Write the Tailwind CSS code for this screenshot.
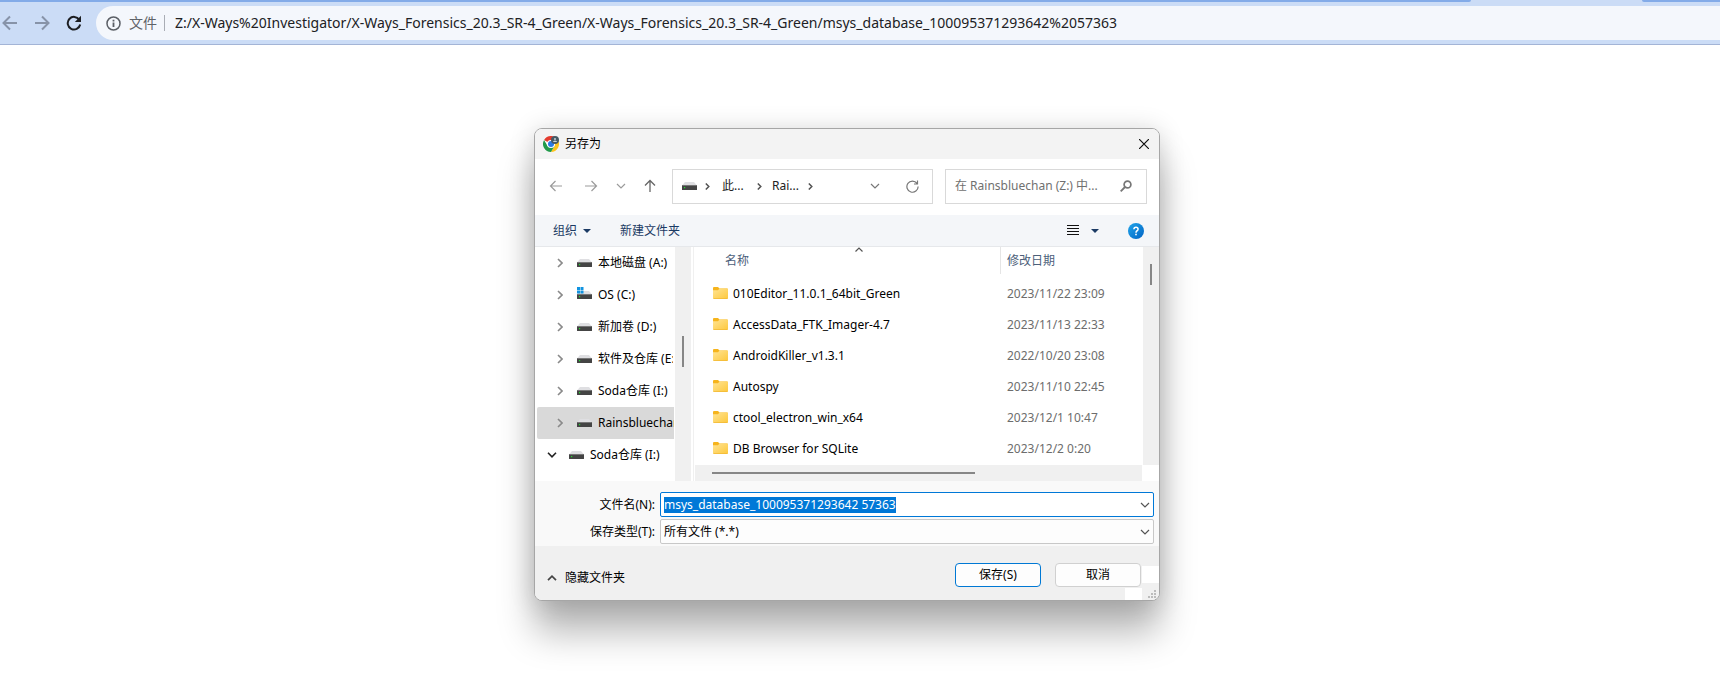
<!DOCTYPE html>
<html lang="zh-CN">
<head>
<meta charset="utf-8">
<title>另存为</title>
<script src="https://cdn.jsdelivr.net/npm/@tailwindcss/browser@4"></script>
</head>
<body class="relative min-h-screen overflow-hidden bg-white font-['Noto_Sans','Noto_Sans_CJK_SC',sans-serif] text-xs text-black">

<svg class="absolute size-0" aria-hidden="true">
  <defs>
    <linearGradient id="fold" x1="0" y1="0" x2="1" y2="1"><stop offset="0" stop-color="#ffe494"/><stop offset="1" stop-color="#fdc83c"/></linearGradient>
    <linearGradient id="help-fill" x1="0" y1="0" x2="1" y2="1"><stop offset="0" stop-color="#22a5ea"/><stop offset="1" stop-color="#0063c4"/></linearGradient>
  </defs>
  <symbol id="drive" viewBox="0 0 15 8"><path d="M3 0h9l3 3.500H0z" fill="#dfdfe2"/><rect y="3" width="15" height="5" rx=".6" fill="#444"/><path d="M.3 3.500h14.400" stroke="#777"/><rect x="2" y="5" width="1.200" height="1.200" fill="#1fe02c"/></symbol>
  <symbol id="folder" viewBox="0 0 15 12"><path d="M0 1Q0 0 1 0h4l1.500 1.500H14q1 0 1 1V6H0z" fill="#f6b41c"/><path d="M0 3.200h5L6.500 1.500H14q1 0 1 1V11q0 1-1 1H1q-1 0-1-1z" fill="url(#fold)"/><path d="M.5 11.600h14" stroke="#f0b833" stroke-width=".8"/></symbol>
  <symbol id="down" viewBox="0 0 10 6"><path d="M1 1l4 4 4-4" fill="none" stroke="currentColor" stroke-width="1.200"/></symbol>
  <symbol id="right" viewBox="0 0 6 10"><path d="M1 1l4 4-4 4" fill="none" stroke="currentColor" stroke-width="1.600"/></symbol>
  <symbol id="crumb" viewBox="0 0 5 7"><path d="M.8.5l3 3-3 3" fill="none" stroke="currentColor" stroke-width="1.500"/></symbol>
</svg>

<header class="border-b border-[#a3b4d6] bg-[#cbdcf6]">
  <div class="flex h-[2px] justify-between">
    <div class="w-[1471px] rounded-br bg-[#83abe8]"></div>
    <div class="w-[78px] rounded-bl bg-[#83abe8]"></div>
  </div>
  <div class="flex h-[42px] items-center py-1">
    <div class="flex w-24 items-center gap-4 pl-0.5">
      <button aria-label="后退" class="text-[#8793a8]"><svg class="size-4" viewBox="0 0 16 16" fill="none" stroke="currentColor" stroke-width="2"><path d="M15 8H2M8 1.500L1.500 8 8 14.500"/></svg></button>
      <button aria-label="前进" class="text-[#8793a8]"><svg class="size-4" viewBox="0 0 16 16" fill="none" stroke="currentColor" stroke-width="2"><path d="M1 8h13M8 1.500L14.500 8 8 14.500"/></svg></button>
      <button aria-label="重新加载" class="text-[#1c1e22]"><svg class="size-4" viewBox="0 0 16 16"><path d="M13.300 4.700A6.300 6.300 0 1 0 14.200 9.500" fill="none" stroke="currentColor" stroke-width="2"/><path d="M15 .8V7H8.800z" fill="currentColor"/></svg></button>
    </div>
    <div class="flex h-[34px] flex-1 items-center rounded-l-full bg-[#f4f7fc] pl-[10px] text-sm leading-5">
      <svg class="size-[15px] text-[#5b5f66]" viewBox="0 0 15 15"><circle cx="7.500" cy="7.500" r="6.500" fill="none" stroke="currentColor" stroke-width="1.500"/><path d="M6.600 6.500h1.800V11H6.600zM6.600 3.800h1.800v1.700H6.600z" fill="currentColor"/></svg>
      <span class="ml-2 text-[#5f6368]">文件</span>
      <span class="ml-[7px] h-4 w-px bg-[#a9adb5]"></span>
      <input aria-label="地址" class="ml-2.5 min-w-0 flex-1 bg-transparent text-[#202124] outline-none" value="Z:/X-Ways%20Investigator/X-Ways_Forensics_20.3_SR-4_Green/X-Ways_Forensics_20.3_SR-4_Green/msys_database_100095371293642%2057363">
    </div>
  </div>
</header>

<section role="dialog" aria-label="另存为" class="absolute left-[534px] top-[128px] w-[626px] overflow-hidden rounded-lg border border-[#a6a6a6] bg-white leading-4 shadow-[0_32px_36px_rgba(0,0,0,0.28),0_2px_26px_rgba(0,0,0,0.16)]">
  <div class="flex h-[30px] items-center bg-[#f3f3f3] pl-2 pr-[10px]">
    <svg class="size-4" viewBox="0 0 16 16"><circle cx="8" cy="8" r="8" fill="#fff"/><path d="M8 8L1.070 4A8 8 0 0 1 14.930 4H8z" fill="#e33b2e"/><path d="M8 4h6.930A8 8 0 0 1 8 16l3.460-6z" fill="#fcc31e"/><path d="M1.070 4A8 8 0 0 0 8 16l3.460-6H4.540z" fill="#229a4b"/><circle cx="8" cy="8" r="4" fill="#fff"/><circle cx="8" cy="8" r="3" fill="#2c7be5"/><circle cx="12" cy="4" r="4" fill="#465a65"/><circle cx="12" cy="3" r="1" fill="#c7d3da"/><path d="M10 6q0-1.500 2-1.500T14 6z" fill="#c7d3da"/></svg>
    <h1 class="ml-1.5">另存为</h1>
    <button aria-label="关闭" class="ml-auto"><svg class="size-[10px]" viewBox="0 0 10 10"><path d="M0 0l10 10M10 0L0 10" stroke="#111" stroke-width="1.200"/></svg></button>
  </div>

  <div class="flex h-14 items-center pb-0.5 pl-[14px] pr-3">
    <div class="flex w-[123px] items-center text-[#9b9b9b]">
      <button aria-label="后退"><svg class="size-[14px]" viewBox="0 0 14 14" fill="none" stroke="currentColor" stroke-width="1.200"><path d="M13 7H1.500M6.500 2l-5 5 5 5"/></svg></button>
      <button aria-label="前进" class="ml-[21px]"><svg class="size-[14px]" viewBox="0 0 14 14" fill="none" stroke="currentColor" stroke-width="1.200"><path d="M1 7h11.500M7.500 2l5 5-5 5"/></svg></button>
      <button aria-label="最近位置" class="ml-[18px]"><svg class="h-[6px] w-[10px]"><use href="#down"/></svg></button>
      <button aria-label="上移" class="ml-[17px] text-[#666]"><svg class="size-[14px]" viewBox="0 0 14 14" fill="none" stroke="currentColor" stroke-width="1.300"><path d="M7 13V1.500M2 6.500l5-5 5 5"/></svg></button>
    </div>
    <nav aria-label="路径" class="flex h-[35px] flex-1 items-center border border-[#d9d9d9] px-[9px] text-[#222]">
      <svg class="h-2 w-[15px]"><use href="#drive"/></svg>
      <svg class="ml-2 h-[7px] w-[5px] text-[#555]"><use href="#crumb"/></svg>
      <button class="ml-3 w-[24px] text-left whitespace-nowrap">此...</button>
      <svg class="ml-[11px] h-[7px] w-[5px] text-[#555]"><use href="#crumb"/></svg>
      <button class="ml-2.5 w-[28px] text-left whitespace-nowrap">Rai...</button>
      <svg class="ml-2 h-[7px] w-[5px] text-[#555]"><use href="#crumb"/></svg>
      <button aria-label="以前的位置" class="ml-auto text-[#777]"><svg class="h-[6px] w-[10px]"><use href="#down"/></svg></button>
      <button aria-label="刷新" class="ml-[26px] mr-1 text-[#777]"><svg class="size-[13px]" viewBox="0 0 13 13" fill="none" stroke="currentColor" stroke-width="1.200"><path d="M11 3.300A5.600 5.600 0 1 0 12.100 6.500M11.500.5v3.500H8"/></svg></button>
    </nav>
    <label class="ml-3 flex h-[35px] w-[202px] items-center border border-[#d9d9d9] pl-[9px] pr-[14px]">
      <input aria-label="搜索" class="min-w-0 flex-1 outline-none placeholder:text-[#707070]" placeholder="在 Rainsbluechan (Z:) 中...">
      <svg class="size-3 text-[#777]" viewBox="0 0 12 12" fill="none" stroke="currentColor"><circle cx="7.500" cy="4.500" r="3.400" stroke-width="1.700"/><path d="M5 7L.7 11.300" stroke-width="1.800"/></svg>
    </label>
  </div>

  <div class="flex h-8 items-center border-b border-[#e6e8eb] bg-[#f4f6f9] pl-[18px] pr-[15px] text-[#1b3a64]">
    <button class="flex items-center gap-1.5">组织<svg class="h-1 w-2" viewBox="0 0 8 4"><path d="M0 0h8L4 4z" fill="currentColor"/></svg></button>
    <button class="ml-[29px]">新建文件夹</button>
    <button aria-label="更改视图" class="ml-auto flex items-center gap-3"><svg class="h-[11px] w-3" viewBox="0 0 12 11"><path d="M0 .5h12M0 3.500h12M0 6.500h12M0 9.500h12" stroke="#111"/></svg><svg class="h-1 w-2" viewBox="0 0 8 4"><path d="M0 0h8L4 4z" fill="currentColor"/></svg></button>
    <button aria-label="帮助" class="ml-[29px]"><svg class="size-4" viewBox="0 0 16 16"><circle cx="8" cy="8" r="8" fill="url(#help-fill)"/><path d="M5.900 6.200Q6 4.200 8 4.200t2.100 1.900Q10.100 7.200 8.800 8 8 8.500 8 9.700" fill="none" stroke="#fff" stroke-width="1.500"/><rect x="7.200" y="10.700" width="1.600" height="1.600" fill="#fff"/></svg></button>
  </div>

  <div class="flex h-[234px]">
    <div role="tree" aria-label="导航窗格" class="w-[140px] overflow-hidden pl-0.5 whitespace-nowrap">
      <div role="treeitem" class="flex h-8 items-center pl-5"><svg class="h-[10px] w-[6px] text-[#8a8a8a]"><use href="#right"/></svg><svg class="ml-[14px] mr-1.5 h-2 w-[15px] shrink-0"><use href="#drive"/></svg>本地磁盘 (A:)</div>
      <div role="treeitem" class="flex h-8 items-center pl-5"><svg class="h-[10px] w-[6px] text-[#8a8a8a]"><use href="#right"/></svg><svg class="mb-1 ml-[14px] mr-1.5 h-3 w-[15px] shrink-0" viewBox="0 0 15 12"><use href="#drive" y="4" width="15" height="8"/><path d="M0 0h3v3H0zM3.500 0h3v3h-3zM0 3.500h3v3H0zM3.500 3.500h3v3h-3z" fill="#1193e0"/></svg>OS (C:)</div>
      <div role="treeitem" class="flex h-8 items-center pl-5"><svg class="h-[10px] w-[6px] text-[#8a8a8a]"><use href="#right"/></svg><svg class="ml-[14px] mr-1.5 h-2 w-[15px] shrink-0"><use href="#drive"/></svg>新加卷 (D:)</div>
      <div role="treeitem" class="mr-0.5 flex h-8 items-center overflow-hidden pl-5"><svg class="h-[10px] w-[6px] shrink-0 text-[#8a8a8a]"><use href="#right"/></svg><svg class="ml-[14px] mr-1.5 h-2 w-[15px] shrink-0"><use href="#drive"/></svg>软件及仓库 (E:)</div>
      <div role="treeitem" class="flex h-8 items-center pl-5"><svg class="h-[10px] w-[6px] shrink-0 text-[#8a8a8a]"><use href="#right"/></svg><svg class="ml-[14px] mr-1.5 h-2 w-[15px] shrink-0"><use href="#drive"/></svg>Soda仓库 (I:)</div>
      <div role="treeitem" aria-selected="true" class="mr-px flex h-8 items-center overflow-hidden rounded-l-xs bg-[#d9d9d9] pl-5"><svg class="h-[10px] w-[6px] shrink-0 text-[#8a8a8a]"><use href="#right"/></svg><svg class="ml-[14px] mr-1.5 h-2 w-[15px] shrink-0"><use href="#drive"/></svg>Rainsbluechan (Z:)</div>
      <div role="treeitem" aria-expanded="true" class="flex h-8 items-center pl-2.5"><svg class="h-[6px] w-[10px] shrink-0 text-[#222]" viewBox="0 0 10 6"><path d="M1 .8l4 4 4-4" fill="none" stroke="currentColor" stroke-width="1.600"/></svg><svg class="ml-3 mr-1.5 h-2 w-[15px] shrink-0"><use href="#drive"/></svg>Soda仓库 (I:)</div>
    </div>
    <div class="w-4 bg-[#f0f0f0] pl-[7px] pt-[89px]"><div class="h-[31px] w-0.5 bg-[#868686]"></div></div>
    <div class="ml-0.5 mr-px w-px bg-[#f0f0f0]"></div>

    <div class="flex min-w-0 flex-1 flex-col">
      <div class="flex h-[218px]">
        <div class="relative flex-1">
          <svg class="absolute left-[160px] top-0 h-[5px] w-2 text-[#555]" viewBox="0 0 8 5"><path d="M.5 4.500L4 1l3.500 3.500" fill="none" stroke="currentColor" stroke-width="1.200"/></svg>
          <table class="w-full table-fixed text-left">
            <thead>
              <tr class="align-top text-[#4c607a]"><th class="h-[31px] p-0 font-normal"><div class="h-[27px] border-r border-[#e5e5e5] pl-[30px] pt-[6px]">名称</div></th><th class="w-[142px] p-0 pl-1.5 pt-[6px] font-normal">修改日期</th></tr>
            </thead>
            <tbody class="whitespace-nowrap">
              <tr class="h-[31px]"><td class="p-0 pl-[18px]"><div class="flex items-center gap-[5px]"><svg class="mb-0.5 h-3 w-[15px]"><use href="#folder"/></svg>010Editor_11.0.1_64bit_Green</div></td><td class="p-0 pl-1.5 text-[#6d6d6d]">2023/11/22 23:09</td></tr>
              <tr class="h-[31px]"><td class="p-0 pl-[18px]"><div class="flex items-center gap-[5px]"><svg class="mb-0.5 h-3 w-[15px]"><use href="#folder"/></svg>AccessData_FTK_Imager-4.7</div></td><td class="p-0 pl-1.5 text-[#6d6d6d]">2023/11/13 22:33</td></tr>
              <tr class="h-[31px]"><td class="p-0 pl-[18px]"><div class="flex items-center gap-[5px]"><svg class="mb-0.5 h-3 w-[15px]"><use href="#folder"/></svg>AndroidKiller_v1.3.1</div></td><td class="p-0 pl-1.5 text-[#6d6d6d]">2022/10/20 23:08</td></tr>
              <tr class="h-[31px]"><td class="p-0 pl-[18px]"><div class="flex items-center gap-[5px]"><svg class="mb-0.5 h-3 w-[15px]"><use href="#folder"/></svg>Autospy</div></td><td class="p-0 pl-1.5 text-[#6d6d6d]">2023/11/10 22:45</td></tr>
              <tr class="h-[31px]"><td class="p-0 pl-[18px]"><div class="flex items-center gap-[5px]"><svg class="mb-0.5 h-3 w-[15px]"><use href="#folder"/></svg>ctool_electron_win_x64</div></td><td class="p-0 pl-1.5 text-[#6d6d6d]">2023/12/1 10:47</td></tr>
              <tr class="h-[31px]"><td class="p-0 pl-[18px]"><div class="flex items-center gap-[5px]"><svg class="mb-0.5 h-3 w-[15px]"><use href="#folder"/></svg>DB Browser for SQLite</div></td><td class="p-0 pl-1.5 text-[#6d6d6d]">2023/12/2 0:20</td></tr>
            </tbody>
          </table>
        </div>
        <div class="w-4 bg-[#f0f0f0] pl-[7px] pt-[17px]"><div class="h-[21px] w-0.5 bg-[#868686]"></div></div>
      </div>
      <div class="mr-[17px] flex-1 bg-[#f0f0f0] pl-[17px] pt-[7px]"><div class="h-0.5 w-[263px] bg-[#868686]"></div></div>
    </div>
  </div>

  <form class="grid grid-cols-[120px_1fr] items-center gap-x-[5px] gap-y-0.5 bg-[#f9f9f9] pb-0.5 pr-[5px] pt-[11px]" onsubmit="return false">
    <label for="filename" class="text-right">文件名(N):</label>
    <div class="flex h-[25px] items-center rounded-xs border border-[#0078d7] bg-white pl-[3px] pr-[3px]">
      <input id="filename" class="min-w-0 flex-1 caret-transparent outline-none selection:bg-[#0078d7] selection:text-white" value="msys_database_100095371293642 57363">
      <button type="button" aria-label="历史文件名" class="text-[#555]"><svg class="h-[6px] w-[10px]"><use href="#down"/></svg></button>
    </div>
    <label for="filetype" class="text-right">保存类型(T):</label>
    <div class="flex h-[25px] items-center rounded-xs border border-[#c8c8c8] bg-[#fdfdfd] pl-[3px] pr-[3px]">
      <select id="filetype" class="min-w-0 flex-1 appearance-none outline-none"><option>所有文件 (*.*)</option></select>
      <svg class="pointer-events-none h-[6px] w-[10px] text-[#555]"><use href="#down"/></svg>
    </div>
  </form>

  <footer class="relative flex h-[54px] items-start bg-[#f0f0f0] pl-3 pr-[18px] pt-[17px]">
    <div class="absolute right-0 top-5 h-[17px] w-[17px] bg-white"></div>
    <div class="absolute bottom-0 right-[17px] h-3 w-[17px] bg-white"></div>
    <svg class="absolute bottom-0.5 right-[3px] size-2 text-[#bcbcbc]" viewBox="0 0 8 8"><path d="M6 0h2v2H6zM3 3h2v2H3zM6 3h2v2H6zM0 6h2v2H0zM3 6h2v2H3zM6 6h2v2H6z" fill="currentColor"/></svg>
    <button class="mt-[7px] flex items-center gap-2"><svg class="h-[6px] w-[10px]" viewBox="0 0 10 6"><path d="M1 5.200l4-4 4 4" fill="none" stroke="#444" stroke-width="1.700"/></svg>隐藏文件夹</button>
    <button class="ml-auto h-6 w-[86px] rounded border border-[#0078d4] bg-[#fdfdfd]">保存(S)</button>
    <button class="ml-[14px] h-6 w-[86px] rounded border border-[#d0d0d0] bg-[#fdfdfd]">取消</button>
  </footer>
</section>

<script>
  const filename = document.getElementById('filename');
  filename.focus();
  filename.select();
</script>
</body>
</html>
